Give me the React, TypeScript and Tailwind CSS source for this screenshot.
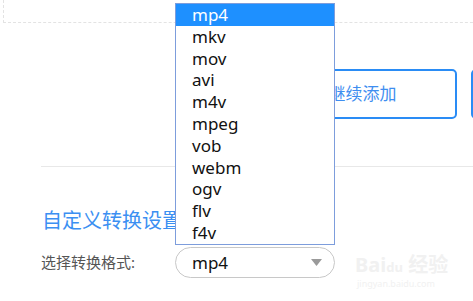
import React from 'react';

const formats = ['mp4', 'mkv', 'mov', 'avi', 'm4v', 'mpeg', 'vob', 'webm', 'ogv', 'flv', 'f4v'];

const latin = { fontFamily: '"Noto Sans", "Liberation Sans", Arial, sans-serif' };
const cjk = { fontFamily: '"Noto Sans", "Noto Sans CJK SC", sans-serif' };

export default function App() {
  return (
    <div className="relative w-[473px] h-[301px] overflow-hidden bg-white" style={cjk}>
      {/* upload area (top cut off) */}
      <div className="ml-[3px] mr-[-20px] h-[23px] border-l border-b border-dashed border-[#e3e3e3]" />

      {/* buttons */}
      <div className="mt-[46px] flex gap-[14px] pl-[262px]">
        <button className="w-[195px] h-[50px] shrink-0 rounded-[5px] border-2 border-[#2a8cf5] text-[17px] text-[#3f8ef0] flex items-center justify-center pl-[6px]">
          继续添加
        </button>
        <button className="w-[150px] h-[50px] shrink-0 rounded-[5px] border-2 border-[#2a8cf5]" />
      </div>

      <div className="mt-[47px] ml-[41px] border-t border-[#e8e8e8]" />

      {/* custom settings */}
      <div className="ml-[42px] mt-[40px] text-[20px] leading-[28px] text-[#3b8ff2]">自定义转换设置</div>
      <div className="ml-[41px] mt-[12px] flex items-center">
        <span className="w-[134px] text-[15px] text-[#555]">选择转换格式:</span>
        <div className="w-[160px] h-[31px] rounded-full border border-[#c8c8c8] flex items-center justify-between pl-[16px] pr-[12px]">
          <span className="text-[17px] text-[#111]" style={latin}>mp4</span>
          <svg width="11" height="7" viewBox="0 0 11 7">
            <path d="M0 0 H11 L5.5 7 Z" fill="#9a9a9a" />
          </svg>
        </div>
      </div>

      {/* open dropdown list */}
      <ul
        className="absolute left-[175px] top-[3px] w-[160px] border border-[#7d9ddc] bg-white text-[17px] text-[#111]"
        style={latin}
      >
        {formats.map((f, i) => (
          <li
            key={f}
            className={`h-[21.8px] leading-[21.8px] pl-[16px] ${i === 0 ? 'bg-[#1e90ff] text-white' : ''}`}
          >
            {f}
          </li>
        ))}
      </ul>

      {/* watermark */}
      <div className="absolute left-[355px] top-[254px] text-[#f1f1f1] select-none" style={latin}>
        <div className="text-[20px] font-bold leading-[22px]">
          Bai<span className="text-[13px] align-middle">du</span> <span style={cjk}>经验</span>
        </div>
        <div className="text-[9px] leading-[12px] pl-[2px]">jingyan.baidu.com</div>
      </div>
    </div>
  );
}
